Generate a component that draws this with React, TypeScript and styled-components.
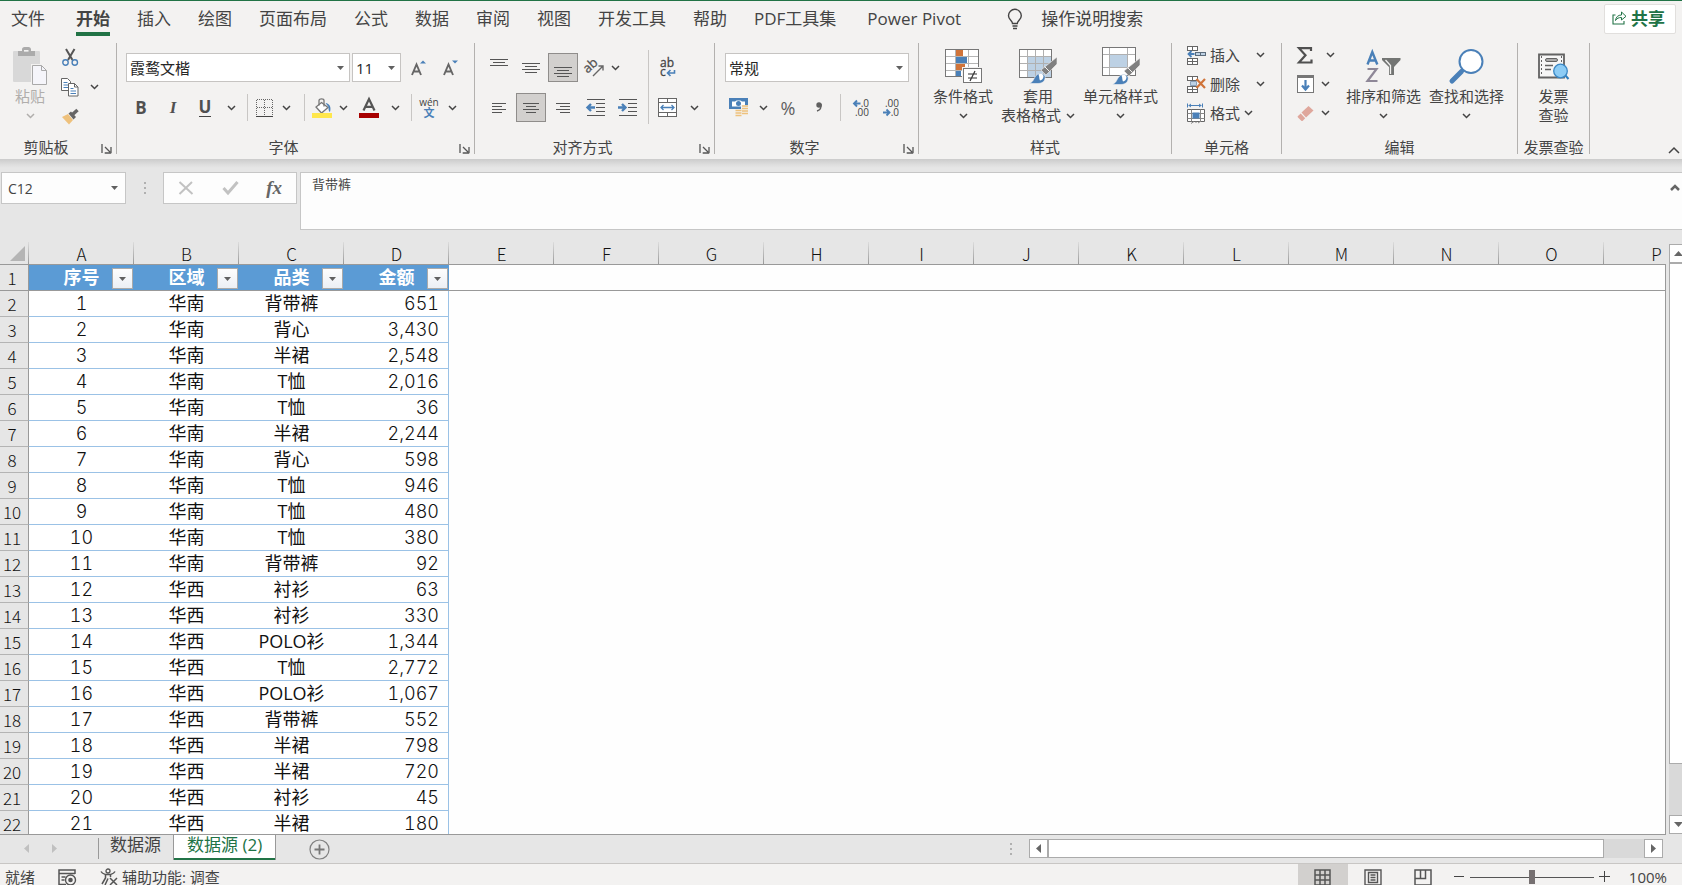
import React from "react";
import styled, { createGlobalStyle, css } from "styled-components";

const UI = `"Open Sans", "Noto Sans CJK SC", sans-serif`;
const GREEN = "#217346";
const BLUE = "#4a80b8";
const INK = "#444";

const GlobalStyle = createGlobalStyle`
  * { box-sizing: border-box; }
  body { margin: 0; background: #e6e6e6; color: ${INK}; font-family: ${UI}; }
  button, input, select, textarea { font: inherit; color: inherit; margin: 0; padding: 0; }
  button { border: 0; background: none; cursor: default; }
  svg { display: block; flex: none; overflow: visible; }
`;

/* ---------- frame ---------- */

const Window = styled.div`
  display: flex;
  flex-direction: column;
  height: 100vh;
  overflow: hidden;
  border-top: 1px solid ${GREEN};
`;

const TabBar = styled.nav`
  flex: none;
  display: flex;
  align-items: flex-start;
  height: 35px;
  padding: 0 6px 0 11px;
  background: #f3f2f1;
`;

const TabList = styled.div`
  display: flex;
  gap: 27px;
`;

const RibbonTab = styled.button<{ $active?: boolean; $wide?: boolean }>`
  height: 35px;
  padding-top: 5px;
  font-size: 17px;
  line-height: 26px;
  white-space: nowrap;
  font-weight: ${(p) => (p.$active ? 700 : 400)};
  border-bottom: 4px solid ${(p) => (p.$active ? GREEN : "transparent")};
  margin-right: ${(p) => (p.$wide ? 4 : 0)}px;
`;

const TellMe = styled.button`
  display: flex;
  align-items: center;
  gap: 18px;
  margin-left: 46px;
  padding-top: 5px;
  font-size: 17px;
  line-height: 26px;
`;

const ShareButton = styled.button`
  display: flex;
  align-items: center;
  gap: 4px;
  height: 30px;
  margin: 3px 0 0 auto;
  padding: 0 10px 3px 7px;
  background: #fff;
  border: 1px solid #e1dfdd;
  border-radius: 2px;
  color: ${GREEN};
  font-size: 17px;
  font-weight: 700;
`;

/* ---------- ribbon ---------- */

const Ribbon = styled.section`
  flex: none;
  display: flex;
  padding: 7px 0 5px;
  background: #f3f2f1;
`;

const GroupBox = styled.div<{ $w: number }>`
  flex: none;
  display: flex;
  flex-direction: column;
  width: ${(p) => p.$w}px;
  height: 111px;
  border-right: 1px solid #b3b1af;
`;

const GroupBody = styled.div<{ $pad?: number; $gap?: number }>`
  flex: 1;
  display: flex;
  align-items: flex-start;
  gap: ${(p) => p.$gap ?? 0}px;
  padding-left: ${(p) => p.$pad ?? 0}px;
`;

const GroupFoot = styled.div`
  display: flex;
  height: 14px;
  font-size: 15px;
  line-height: 14px;
`;

const GroupLabel = styled.span`
  flex: 1;
  text-align: center;
  white-space: nowrap;
`;

const Launcher = styled.button`
  display: flex;
  justify-content: flex-end;
  align-items: flex-end;
  width: 24px;
  padding-right: 4px;
`;

const Rows = styled.div`
  display: flex;
  flex-direction: column;
  gap: 11px;
  padding-top: 10px;
`;

const Row = styled.div<{ $gap?: number }>`
  display: flex;
  align-items: center;
  height: 29px;
  gap: ${(p) => p.$gap ?? 2}px;
`;

const Joined = styled.div`
  display: flex;
`;

const Stack = styled.div<{ $gap?: number; $top?: number; $w?: number }>`
  display: flex;
  flex-direction: column;
  gap: ${(p) => p.$gap ?? 5}px;
  padding-top: ${(p) => p.$top ?? 0}px;
  width: ${(p) => (p.$w ? `${p.$w}px` : "auto")};
`;

const StackRow = styled.div`
  display: flex;
  align-items: center;
  height: 24px;
`;

const ToolButton = styled.button<{ $w?: number; $pressed?: boolean }>`
  display: flex;
  align-items: center;
  justify-content: center;
  width: ${(p) => p.$w ?? 30}px;
  height: 29px;
  ${(p) =>
    p.$pressed &&
    css`
      background: #d2d0ce;
      border: 1px solid #8f8d8b;
    `}
`;

const Glyph = styled.span<{ $italic?: boolean; $line?: boolean }>`
  font-size: 17px;
  line-height: 18px;
  font-weight: 700;
  font-style: ${(p) => (p.$italic ? "italic" : "normal")};
  font-family: ${(p) => (p.$italic ? `"Liberation Serif", serif` : UI)};
  border-bottom: ${(p) => (p.$line ? `1px solid ${INK}` : "0")};
  color: #505050;
`;

const Percent = styled.span`
  font-size: 18px;
  color: #606060;
`;

const Rule = styled.span<{ $tall?: boolean }>`
  width: 1px;
  height: ${(p) => (p.$tall ? 74 : 27)}px;
  margin: ${(p) => (p.$tall ? "7px 7px 0 6px" : "0 5px")};
  background: #c8c6c4;
`;

const Combo = styled.label<{ $w: number }>`
  display: grid;
  align-items: center;
  width: ${(p) => p.$w}px;
  height: 29px;
  background: #fff;
  border: 1px solid #c6c4c2;
  color: #262626;
  > * {
    grid-area: 1 / 1;
  }
  > svg {
    justify-self: end;
    margin-right: 5px;
    pointer-events: none;
  }
`;

const ComboSelect = styled.select`
  appearance: none;
  width: 100%;
  height: 27px;
  padding-left: 3px;
  border: 0;
  background: none;
  font-size: 15px;
`;

const BigButton = styled.button<{ $off?: boolean; $w?: number }>`
  display: flex;
  flex-direction: column;
  align-items: center;
  width: ${(p) => (p.$w ? `${p.$w}px` : "auto")};
  padding-top: 3px;
  font-size: 15px;
  line-height: 19px;
  white-space: nowrap;
  color: ${(p) => (p.$off ? "#b0aeac" : INK)};
`;

const BigIcon = styled.span`
  display: flex;
  align-items: center;
  justify-content: center;
  height: 41px;
`;

const BigLine = styled.span`
  display: flex;
  align-items: center;
  justify-content: center;
  gap: 5px;
  height: 19px;
`;

const LineButton = styled.button`
  display: flex;
  align-items: center;
  gap: 4px;
  height: 24px;
  font-size: 15px;
  line-height: 24px;
`;

const LineText = styled.span<{ $w: number }>`
  width: ${(p) => p.$w}px;
  text-align: left;
`;

const Collapse = styled.button`
  align-self: flex-end;
  margin: 0 2px 0 auto;
`;

/* ---------- formula bar ---------- */

const FormulaBar = styled.section`
  flex: none;
  display: flex;
  align-items: flex-start;
  padding: 13px 0 0 1px;
  background: linear-gradient(#cbcbcb, #dcdcdc 5px, #e6e6e6 9px);
  font-size: 13px;
`;

const NameBox = styled.div`
  display: flex;
  align-items: center;
  width: 125px;
  height: 32px;
  padding: 0 7px 0 6px;
  background: #fdfdfd;
  border: 1px solid #c6c6c6;
  font-size: 14px;
`;

const NameInput = styled.input`
  flex: 1;
  min-width: 0;
  border: 0;
  background: none;
  outline: 0;
`;

const Grip = styled.span`
  display: flex;
  align-items: center;
  justify-content: center;
  width: 37px;
  height: 32px;
`;

const EntryButtons = styled.div`
  display: flex;
  align-items: center;
  justify-content: space-around;
  width: 134px;
  height: 32px;
  margin-right: 3px;
  background: #fdfdfd;
  border: 1px solid #c6c6c6;
`;

const Fx = styled.span`
  font: italic 700 19px/28px "Liberation Serif", serif;
  color: #666;
`;

const FormulaField = styled.div`
  flex: 1;
  display: flex;
  align-items: flex-start;
  height: 58px;
  padding-right: 2px;
  background: #fdfdfd;
  border: 1px solid #c6c6c6;
  border-right: 0;
`;

const FormulaInput = styled.textarea`
  flex: 1;
  height: 54px;
  padding: 2px 11px;
  border: 0;
  outline: 0;
  resize: none;
  background: none;
  line-height: 18px;
`;

const Expand = styled.button`
  padding-top: 11px;
`;

/* ---------- sheet ---------- */

const SheetArea = styled.main`
  flex: 1;
  min-height: 0;
  display: flex;
  padding-top: 12px;
`;

const SheetView = styled.div`
  position: relative;
  flex: 1;
  min-width: 0;
  overflow: hidden;
  border-bottom: 1px solid #999;
  &::after {
    content: "";
    position: absolute;
    top: 22px;
    right: 0;
    bottom: 0;
    width: 1px;
    background: #999;
  }
`;

const Grid = styled.table`
  table-layout: fixed;
  width: 1709px;
  border-collapse: separate;
  border-spacing: 0;
  color: #111;
  th,
  td {
    padding: 0;
  }
`;

const RowHeadCol = styled.col`
  width: 29px;
`;

const DataCol = styled.col`
  width: 105px;
`;

const Corner = styled.td`
  background: linear-gradient(#dcdcdc, #999) right / 1px 100% no-repeat #e6e6e6;
  border-bottom: 1px solid #999;
  > svg {
    margin-left: 10px;
  }
`;

const ColHead = styled.th`
  height: 23px;
  border-bottom: 1px solid #999;
  background: linear-gradient(#dcdcdc, #999) right / 1px 100% no-repeat #e6e6e6;
  font: 300 17px/20px "Noto Sans CJK SC", sans-serif;
  && {
    padding-top: 2px;
  }
`;

const RowHead = styled.th<{ $first?: boolean }>`
  height: 26px;
  border-right: 1px solid #999;
  border-bottom: 1px solid ${(p) => (p.$first ? "#999" : "#b4b4b4")};
  background: #e6e6e6;
  font: 300 17px/25px "Noto Sans CJK SC", sans-serif;
  && {
    padding-right: 4px;
  }
`;

const TitleCell = styled.th`
  position: relative;
  height: 26px;
  background: #5b9bd5;
  border-bottom: 1px solid #999;
  color: #fff;
  font-size: 18px;
  line-height: 25px;
`;

const FilterButton = styled.button`
  position: absolute;
  right: 1px;
  bottom: 1px;
  display: flex;
  align-items: center;
  justify-content: center;
  width: 21px;
  height: 21px;
  background: linear-gradient(#fdfdfd, #eceff5);
  border: 1px solid #aaa;
`;

const Cell = styled.td<{ $num?: boolean; $edge?: boolean }>`
  height: 26px;
  background: #fff;
  border-bottom: 1px solid #9bc2e6;
  border-right: ${(p) => (p.$edge ? "1px solid #9bc2e6" : "0")};
  font-family: ${(p) => (p.$num ? "Inter, sans-serif" : UI)};
  font-size: 18px;
  font-weight: ${(p) => (p.$num ? 300 : 400)};
  font-variant-numeric: tabular-nums;
  line-height: 25px;
  text-align: ${(p) => (p.$edge ? "right" : "center")};
  && {
    padding-right: ${(p) => (p.$edge ? 9 : 0)}px;
  }
`;

const Blank = styled.td<{ $first?: boolean }>`
  background: #fefefe;
  border-bottom: ${(p) => (p.$first ? "1px solid #999" : "0")};
`;

const VScroll = styled.div`
  flex: none;
  display: flex;
  flex-direction: column;
  width: 16px;
  padding: 2px 0 1px 3px;
  overflow: hidden;
`;

const ScrollButton = styled.button`
  flex: none;
  display: flex;
  align-items: center;
  justify-content: center;
  width: 19px;
  height: 19px;
  background: #fff;
  border: 1px solid #ababab;
`;

const Thumb = styled.div<{ $grow: number; $wide?: boolean }>`
  flex: ${(p) => p.$grow} 1 0;
  width: ${(p) => (p.$wide ? "auto" : "19px")};
  background: #fff;
  border: 1px solid #ababab;
`;

const Track = styled.div<{ $grow: number }>`
  flex: ${(p) => p.$grow} 1 0;
  background: #d9d9d9;
`;

/* ---------- sheet tabs and status ---------- */

const SheetBar = styled.footer`
  flex: none;
  display: flex;
  height: 29px;
  border-bottom: 1px solid #c8c6c4;
`;

const NavButtons = styled.div`
  display: flex;
  align-items: center;
  width: 98px;
  padding: 0 0 2px 12px;
`;

const SheetTab = styled.button<{ $active?: boolean }>`
  font-size: 17px;
  white-space: nowrap;
  ${(p) =>
    p.$active
      ? css`
          height: 26px;
          margin-top: -1px;
          padding: 0 13px 5px;
          background: #fff;
          color: ${GREEN};
          border: solid #999;
          border-width: 0 1px;
          line-height: 21px;
          box-shadow: inset 0 -2px ${GREEN};
        `
      : css`
          height: 21px;
          margin-top: 3px;
          padding: 0 12px 7px 11px;
          border-left: 1px solid #999;
          line-height: 14px;
        `}
`;

const AddSheet = styled.button`
  align-self: center;
  margin-left: 33px;
`;

const HScroll = styled.div`
  display: flex;
  align-items: center;
  width: 41%;
  height: 27px;
  margin-left: auto;
  padding-right: 19px;
  > div {
    height: 19px;
  }
`;

const StatusBar = styled.footer`
  flex: none;
  display: flex;
  height: 21px;
  padding: 0 15px 0 5px;
  background: #f3f2f1;
  font-size: 15px;
  line-height: 26px;
  white-space: nowrap;
`;

const StatusItem = styled.button`
  display: flex;
  align-items: center;
  gap: 4px;
  height: 26px;
  margin-right: 23px;
`;

const StatusTools = styled.div`
  display: flex;
  height: 26px;
  margin-left: auto;
`;

const ViewButton = styled.button<{ $active?: boolean }>`
  display: flex;
  align-items: center;
  justify-content: center;
  width: 50px;
  height: 26px;
  background: ${(p) => (p.$active ? "#d2d0ce" : "none")};
`;

const ZoomStep = styled.button`
  display: flex;
  align-items: center;
  justify-content: center;
  width: 22px;
  height: 25px;
`;

const ZoomSlider = styled.input`
  appearance: none;
  width: 124px;
  height: 26px;
  background: linear-gradient(#555, #555) center / 100% 1px no-repeat;
  &::-webkit-slider-thumb {
    appearance: none;
    width: 6px;
    height: 14px;
    background: #767071;
  }
`;

const ZoomValue = styled.span`
  margin-left: 13px;
`;

/* ---------- icons ---------- */

const Svg = ({ w, h, children, crisp }: { w: number; h: number; children: React.ReactNode; crisp?: boolean }) => (
  <svg width={w} height={h} viewBox={`0 0 ${w} ${h}`} fill="none" aria-hidden="true" shapeRendering={crisp ? "crispEdges" : undefined}>
    {children}
  </svg>
);

const Chevron = ({ color = INK }: { color?: string }) => (
  <Svg w={9} h={6}>
    <path d="M1 1l3.500 3.500L8 1" stroke={color} strokeWidth="1.500" />
  </Svg>
);

const DownTri = () => (
  <Svg w={7} h={4}>
    <path d="M0 0h7L3.500 4z" fill="#606060" />
  </Svg>
);

const LauncherIcon = () => (
  <Svg w={11} h={10}>
    <path d="M1 0v9M4 3l5 5M10 3v6.300M3.700 9h6.300" stroke="#555" strokeWidth="1.300" />
  </Svg>
);

const Bulb = () => (
  <Svg w={16} h={21}>
    <path d="M5.500 14.500c0-3-4-3.800-4-7.800a6.300 6.300 0 0 1 12.800 0c0 4-4 4.800-4 7.800zM5.500 17h5M6 19.500h4" stroke="#444" strokeWidth="1.400" />
  </Svg>
);

const ShareIcon = () => (
  <Svg w={15} h={15}>
    <path d="M3.500 5H1v9h11v-3" stroke={GREEN} strokeWidth="1.100" />
    <path d="M3.500 10.500c.5-3.500 2.500-5.500 6-5.500V2l4.500 4.300L9.500 10V7.500c-3 0-4.500.8-6 3z" stroke={GREEN} />
  </Svg>
);

const PasteIcon = () => (
  <Svg w={36} h={39}>
    <rect x="1" y="4" width="27" height="31" rx="1" fill="#d8d8d8" />
    <path d="M6 9V4h4V2.500C10 1 11 0 12.500 0h4C18 0 19 1 19 2.500V4h4v5zM12 3v2h4.500V3z" fill="#ababab" fillRule="evenodd" />
    <path d="M19 17h17v22H19z" fill="#f3f2f1" />
    <path d="M20.500 18.500h9l5 5v14h-14z" fill="#f5f5fa" stroke="#a9a9a9" />
    <path d="M29.500 18.500v5h5" stroke="#a9a9a9" />
  </Svg>
);

const CutIcon = () => (
  <Svg w={17} h={19}>
    <path d="M4 1l6.500 11M12.500 1L6 12" stroke="#555" strokeWidth="2" />
    <circle cx="3.500" cy="14.500" r="2.700" stroke={BLUE} strokeWidth="1.400" />
    <circle cx="12.800" cy="14.500" r="2.700" stroke={BLUE} strokeWidth="1.400" />
  </Svg>
);

const CopyIcon = () => (
  <Svg w={18} h={19}>
    <path d="M.5.500h6l3 3v9h-9z" fill="#fff" stroke="#666" />
    <path d="M2.500 4.500h4M2.500 7h5M2.500 9.500h5" stroke={BLUE} />
    <path d="M7.500 5.500h6l3.500 3.500v9H7.500z" fill="#fff" stroke="#666" />
    <path d="M13.500 5.500V9H17" stroke="#666" />
    <path d="M9.500 10.500h3M9.500 13h5.500M9.500 15.500h5.500" stroke={BLUE} />
  </Svg>
);

const PainterIcon = () => (
  <Svg w={18} h={16}>
    <path d="M1 8l6-3 5 6-4 4.500z" fill="#eec17c" />
    <path d="M7.500 4.500L10 2.500l5 5.500-2.500 2.500z" fill="#666" />
    <path d="M11.500 5.500L16.500 1" stroke="#666" strokeWidth="3.500" />
  </Svg>
);

const FontStep = ({ up }: { up?: boolean }) => (
  <Svg w={15} h={16}>
    <path d="M1 15L5.500 4.500 10 15M2.700 11.500h5.600" stroke="#666" strokeWidth="1.900" />
    <path d={up ? "M9 3.500h6L12 .5z" : "M9 .5h6L12 3.500z"} fill={BLUE} />
  </Svg>
);

const BorderIcon = () => (
  <Svg w={17} h={18} crisp>
    <path d="M.5.500h16M.5 8.500h16" stroke="#666" strokeDasharray="1 1" />
    <path d="M.5.500v16M8.500.500v16M16.500.500v16" stroke="#666" strokeDasharray="1 1" />
    <path d="M0 17.500h17" stroke="#444" />
  </Svg>
);

const FillIcon = () => (
  <Svg w={20} h={20}>
    <path d="M9.500 4.500L16 9.500l-6.500 5.500L4 9z" fill="#fff" stroke="#777" strokeWidth="1.300" />
    <path d="M7 7.500V2.500c0-2.200 5-2.200 5 0v6" stroke="#777" strokeWidth="1.300" />
    <path d="M13.500 5c4 .5 6 4 4.500 9-1.500-.5-1.500-3.500-1.500-5z" fill={BLUE} />
    <rect y="15" width="20" height="5" fill="#ffe74c" />
  </Svg>
);

const FontColorIcon = () => (
  <Svg w={20} h={20}>
    <path d="M4.500 12.500L10 1l5.500 11.500M6.500 8.800h7" stroke="#555" strokeWidth="2.200" />
    <rect y="15" width="20" height="5" fill="#a80000" />
  </Svg>
);

const Phonetic = styled.span`
  display: flex;
  flex-direction: column;
  align-items: center;
  font-size: 10px;
  line-height: 9px;
  color: #444;
  > b {
    font-size: 11px;
    line-height: 11px;
    color: ${BLUE};
  }
`;

const Lines = ({ rows, w }: { rows: [number, number, number][]; w: number }) => (
  <Svg w={w} h={18} crisp>
    {rows.map(([x, y, len]) => (
      <rect key={y} x={x} y={y} width={len} height={1} fill="#555" />
    ))}
  </Svg>
);

const OrientIcon = () => (
  <Svg w={20} h={18}>
    <g transform="rotate(-42 7 8)">
      <text x="-1" y="10" fontSize="13" fontFamily="Open Sans" fill="#555" stroke="#555" strokeWidth=".3">
        ab
      </text>
    </g>
    <path d="M8 17L18 7M13.500 7h4.500v4.500" stroke="#666" strokeWidth="1.400" />
  </Svg>
);

const IndentIcon = ({ right }: { right?: boolean }) => (
  <Svg w={19} h={17}>
    <path d="M1 .5h18M10 4.500h9M10 8.500h9M10 12.500h9M1 16.500h18" stroke="#555" shapeRendering="crispEdges" />
    <path d={right ? "M0 8.500h7M4 5l3.500 3.500L4 12" : "M9 8.500H2M5 5L1.500 8.500 5 12"} stroke={BLUE} strokeWidth="2.400" />
  </Svg>
);

const WrapIcon = () => (
  <Svg w={17} h={18}>
    <text x="1" y="8" fontSize="12" fontFamily="Open Sans" fill="#444" stroke="#444" strokeWidth=".3">
      ab
    </text>
    <text x="1" y="17" fontSize="12" fontFamily="Open Sans" fill="#444" stroke="#444" strokeWidth=".3">
      c
    </text>
    <path d="M15.500 11v3H9M11.500 11L8.500 14l3 3" stroke={BLUE} strokeWidth="1.600" />
  </Svg>
);

const MergeIcon = () => (
  <Svg w={19} h={19}>
    <path d="M.5.500h18v18H.5zM.5 4.500h18M.5 14.500h18M9.500.500v4M9.500 14.500v4" fill="#fff" stroke="#666" shapeRendering="crispEdges" />
    <path d="M3 9.500h13M5.500 7L3 9.500 5.500 12M13.500 7L16 9.500 13.500 12" stroke={BLUE} strokeWidth="1.300" />
  </Svg>
);

const CurrencyIcon = () => (
  <Svg w={20} h={20}>
    <path d="M0 0h19v11H0z" fill={BLUE} />
    <path d="M3 3.500h3l1.500-1h4l1.500 1h3v4h-3v1H3z" fill="#fff" />
    <circle cx="9.500" cy="5.500" r="2.500" fill={BLUE} />
    <path d="M12 7h7v10h-5v2H6v-8h6z" fill="#f3f2f1" />
    <path d="M13 8h6M13 10.500h6M13 13h6M13 15.500h6M6.500 12.500h6M6.500 15h6M6.500 17.500h6" stroke="#eec17c" strokeWidth="1.600" />
  </Svg>
);

const CommaIcon = () => (
  <Svg w={7} h={11}>
    <circle cx="3" cy="3" r="2.700" fill="#606060" />
    <path d="M5 2c.6 3.500-1 6-4 7" stroke="#606060" strokeWidth="1.500" />
  </Svg>
);

const DecimalIcon = ({ less }: { less?: boolean }) => (
  <Svg w={16} h={18}>
    <text x="16" y="8" textAnchor="end" fontSize="10" fontFamily="Open Sans" fill="#444">
      {less ? ".00" : ".0"}
    </text>
    <text x="16" y="17" textAnchor="end" fontSize="10" fontFamily="Open Sans" fill="#444">
      {less ? ".0" : ".00"}
    </text>
    <path d={less ? "M0 13.500h6M3.500 10.500l3 3-3 3" : "M7.500 4.500h-6M4 1.500l-3 3 3 3"} stroke={BLUE} strokeWidth="1.900" />
  </Svg>
);

const CondIcon = () => (
  <Svg w={37} h={35} crisp>
    <path d="M.5.500h33v27H.5z" fill="#fff" stroke="#777" />
    <path d="M11 0h7v7h-7zM11 15h9v6h-9z" fill="#d0743a" />
    <path d="M11 8h11v6H11zM11 22h5v5h-5z" fill={BLUE} />
    <path d="M1 7.500h32M1 14.500h32M1 21.500h32M10.500 1v26M23.500 1v26" stroke="#b5b5b5" />
    <path d="M.5.500h33v27H.5z" stroke="#777" />
    <rect x="17" y="18" width="20" height="17" fill="#f3f2f1" />
    <rect x="18.500" y="19.500" width="18" height="14" fill="#fff" stroke="#777" />
    <path d="M23 25h9M23 29h9M30 22l-5 10" stroke="#333" strokeWidth="1.200" shapeRendering="auto" />
  </Svg>
);

const Brush = () => (
  <g>
    <path d="M38 8v7L27 26l-5-5z" fill="#808080" stroke="#f3f2f1" strokeWidth=".6" />
    <path d="M25.500 17.500l5 5" stroke="#f3f2f1" />
    <path d="M10 34.500c4-1.500 4.500-4 6-6.500 2.500-4.500 8.500-4.500 10-1 1 4.500-2.500 7.500-7 7.500z" fill={BLUE} stroke="#f3f2f1" strokeWidth=".6" />
    <path d="M19.500 25.500c2.500-1.500 5-.5 5 2-.3 2.500-1.500 3.500-3.500 4-1-1.500-.3-3.500-1.500-6z" fill="#fff" />
  </g>
);

const TableStyleIcon = () => (
  <Svg w={38} h={36}>
    <g shapeRendering="crispEdges">
      <path d="M.5.500h32v28H.5z" fill="#fff" />
      <path d="M9 8h24v21H9z" fill="#bdd1e4" />
      <path d="M1 7.500h32M1 14.500h32M1 21.500h32M8.500 1v27M16.500 1v27M24.500 1v27" stroke="#b0b0b0" />
      <path d="M.5.500h32v28H.5z" stroke="#777" />
    </g>
    <Brush />
  </Svg>
);

const CellStyleIcon = () => (
  <Svg w={38} h={39}>
    <g shapeRendering="crispEdges">
      <path d="M.5.500h33v28H.5z" fill="#fff" />
      <path d="M8 8h18v13H8z" fill="#bdd1e4" />
      <path d="M1 7.500h32M1 20.500h32M7.500 1v27M25.500 1v27" stroke="#b0b0b0" />
      <path d="M.5.500h33v28H.5z" stroke="#777" />
    </g>
    <g transform="translate(0 3)">
      <Brush />
    </g>
  </Svg>
);

const InsertIcon = () => (
  <Svg w={19} h={19} crisp>
    <path d="M.5.500h10v4H.5zM5.500.500v4M.5 12.500h10v6H.5zM5.500 12.500v6M.5 15.500h10" stroke="#666" fill="#fff" />
    <path d="M8.500 6.500h10v3h-10zM13.500 6.500v3" stroke="#5b6b7b" fill="#bdd1e4" />
    <path d="M1.500 8h6M4.500 5l-3 3 3 3" stroke={BLUE} strokeWidth="1.800" shapeRendering="auto" />
  </Svg>
);

const DeleteIcon = () => (
  <Svg w={19} h={19}>
    <path d="M.5 1.500h10v4H.5zM5.500 1.500v4M.5 11.500h10v6H.5zM5.500 11.500v6M.5 14.500h10" stroke="#666" fill="#fff" shapeRendering="crispEdges" />
    <path d="M3.500 6.500h6v4h-6z" stroke="#8aa0b8" fill="#bdd1e4" />
    <path d="M9.500 4l8.500 9M18 4l-8.500 9" stroke="#d0743a" strokeWidth="2.200" />
  </Svg>
);

const FormatIcon = () => (
  <Svg w={19} h={21}>
    <path d="M1.500 2.500h13M.5.500v4M15.500.500v4M4 1L2 2.500 4 4M12 1l2 1.500L12 4" stroke={BLUE} />
    <path d="M.5 6.500h17v12H.5z" fill="#fff" stroke="#666" />
    <path d="M4.500 6.500v12M13.500 6.500v12M.5 10.500h17M.5 15.500h17M9 18.500v1.500M4 20.500l3-2M11 20l3-2" stroke="#888" />
    <rect x="5.500" y="9.500" width="7" height="6" fill={BLUE} />
  </Svg>
);

const SigmaIcon = () => (
  <Svg w={16} h={17}>
    <path d="M14 4V1.200H2L8.500 8.300 2 15.500h12.500v-3" stroke="#505050" strokeWidth="2.200" />
  </Svg>
);

const FillDownIcon = () => (
  <Svg w={17} h={18}>
    <rect x=".5" y=".5" width="16" height="17" fill="#fff" stroke="#777" />
    <rect width="17" height="3" fill="#777" />
    <path d="M8.500 5v9M5 10.500l3.500 4 3.500-4" stroke={BLUE} strokeWidth="2.200" />
  </Svg>
);

const EraserIcon = () => (
  <Svg w={17} h={17}>
    <path d="M11.500 1l5 4.500-7.500 7-4.500-5z" fill="#dfa79c" />
    <path d="M3.700 8.400l4.500 4.800-2.400 2.500c-.6.500-1 .5-1.500 0L1 12.500c-.5-.6-.5-1 0-1.500z" fill="#dfa79c" />
  </Svg>
);

const SortIcon = () => (
  <Svg w={35} h={33}>
    <path d="M1.500 14.500L6.300 2l5 12.500M3.300 10.500h6.200" stroke={BLUE} strokeWidth="2.400" />
    <path d="M1.500 19h9L1.500 31H11.500" stroke="#8e8797" strokeWidth="2.200" />
    <path d="M16 8h18.500v2L28 17v8h-5v-8L16 10z" fill="#737573" />
    <path d="M19.500 10l5 5.500V24" stroke="#f3f2f1" strokeWidth="1.300" />
  </Svg>
);

const FindIcon = () => (
  <Svg w={35} h={35}>
    <path d="M12.500 22.500L3 32" stroke={BLUE} strokeWidth="5" strokeLinecap="round" />
    <circle cx="22" cy="12.500" r="11.500" fill="#fff" stroke={BLUE} strokeWidth="2" />
  </Svg>
);

const InvoiceIcon = () => (
  <Svg w={31} h={28}>
    <path d="M1 1.500h25v23H1z" fill="#f6f6f6" stroke="#626262" strokeWidth="1.800" />
    <path d="M3.500 3v20M23.500 3v12" stroke="#626262" strokeDasharray="2 2" />
    <rect x="7.500" y="5.500" width="12" height="3" rx="1.500" fill="#aaa" stroke="#626262" />
    <path d="M7 12.500h8M7 16.500h6" stroke="#626262" strokeWidth="1.500" />
    <path d="M27 22l3.500 4" stroke="#2f7fc0" strokeWidth="2" />
    <circle cx="22.500" cy="18" r="6.800" fill="#8dccf5" stroke="#3a87c4" strokeWidth="1.300" />
  </Svg>
);

const Arrow = ({ dir, color = "#666" }: { dir: "left" | "right" | "up" | "down"; color?: string }) => {
  const d = { left: "M7 0v9L2 4.500z", right: "M2 0v9l5-4.500z", up: "M0 7h9L4.500 2z", down: "M0 2h9L4.500 7z" }[dir];
  return (
    <Svg w={9} h={9}>
      <path d={d} fill={color} />
    </Svg>
  );
};

const Dots = () => (
  <Svg w={2} h={12} crisp>
    <path d="M0 0h2v2H0zM0 5h2v2H0zM0 10h2v2H0z" fill="#b0b0b0" />
  </Svg>
);

/* ---------- data ---------- */

const TABS = ["文件", "开始", "插入", "绘图", "页面布局", "公式", "数据", "审阅", "视图", "开发工具", "帮助", "PDF工具集", "Power Pivot"];
const COLUMNS = "ABCDEFGHIJKLMNOP".split("");
const TITLES = ["序号", "区域", "品类", "金额"];
const RECORDS: [string, string, string][] = [
  ["华南", "背带裤", "651"],
  ["华南", "背心", "3,430"],
  ["华南", "半裙", "2,548"],
  ["华南", "T恤", "2,016"],
  ["华南", "T恤", "36"],
  ["华南", "半裙", "2,244"],
  ["华南", "背心", "598"],
  ["华南", "T恤", "946"],
  ["华南", "T恤", "480"],
  ["华南", "T恤", "380"],
  ["华南", "背带裤", "92"],
  ["华西", "衬衫", "63"],
  ["华西", "衬衫", "330"],
  ["华西", "POLO衫", "1,344"],
  ["华西", "T恤", "2,772"],
  ["华西", "POLO衫", "1,067"],
  ["华西", "背带裤", "552"],
  ["华西", "半裙", "798"],
  ["华西", "半裙", "720"],
  ["华西", "衬衫", "45"],
  ["华西", "半裙", "180"],
];

/* ---------- composed parts ---------- */

type GroupProps = { label: string; w: number; pad?: number; gap?: number; launcher?: boolean; children: React.ReactNode };

const Group = ({ label, w, pad, gap, launcher, children }: GroupProps) => (
  <GroupBox $w={w} role="group" aria-label={label}>
    <GroupBody $pad={pad} $gap={gap}>
      {children}
    </GroupBody>
    <GroupFoot>
      <GroupLabel>{label}</GroupLabel>
      {launcher && (
        <Launcher aria-label={`${label}设置`}>
          <LauncherIcon />
        </Launcher>
      )}
    </GroupFoot>
  </GroupBox>
);

const More = ({ w = 18, label }: { w?: number; label: string }) => (
  <ToolButton $w={w} aria-label={`${label}选项`}>
    <Chevron />
  </ToolButton>
);

const Tool = ({ label, w, pressed, children }: { label: string; w?: number; pressed?: boolean; children: React.ReactNode }) => (
  <ToolButton $w={w} $pressed={pressed} aria-label={label} aria-pressed={pressed}>
    {children}
  </ToolButton>
);

const Picker = ({ label, value, w }: { label: string; value: string; w: number }) => (
  <Combo $w={w}>
    <ComboSelect aria-label={label} defaultValue={value}>
      <option>{value}</option>
    </ComboSelect>
    <DownTri />
  </Combo>
);

const Big = ({ icon, lines, tail, off, w }: { icon: React.ReactNode; lines: string[]; tail?: boolean; off?: boolean; w?: number }) => (
  <BigButton $off={off} $w={w}>
    <BigIcon>{icon}</BigIcon>
    {lines.map((line, i) => (
      <BigLine key={line}>
        {line}
        {tail && i === 1 && <Chevron />}
      </BigLine>
    ))}
    {lines.length === 1 && (
      <BigLine>
        <Chevron color={off ? "#b0aeac" : INK} />
      </BigLine>
    )}
  </BigButton>
);

const ClipboardGroup = () => (
  <Group label="剪贴板" w={117} launcher>
    <Big off w={60} icon={<PasteIcon />} lines={["粘贴"]} />
    <Stack $gap={6} $top={2}>
      <StackRow>
        <Tool label="剪切" w={20}><CutIcon /></Tool>
      </StackRow>
      <StackRow>
        <Tool label="复制" w={20}><CopyIcon /></Tool>
        <More w={28} label="复制" />
      </StackRow>
      <StackRow>
        <Tool label="格式刷" w={20}><PainterIcon /></Tool>
      </StackRow>
    </Stack>
  </Group>
);

const FontGroup = () => (
  <Group label="字体" w={358} pad={9} launcher>
    <Rows>
      <Row>
        <Picker label="字体" value="霞鹜文楷" w={224} />
        <Picker label="字号" value="11" w={49} />
        <Tool label="增大字号"><FontStep up /></Tool>
        <Tool label="减小字号"><FontStep /></Tool>
      </Row>
      <Row>
        <Tool label="加粗"><Glyph>B</Glyph></Tool>
        <Tool label="倾斜"><Glyph $italic>I</Glyph></Tool>
        <Tool label="下划线"><Glyph $line>U</Glyph></Tool>
        <More label="下划线" />
        <Rule />
        <Tool label="边框" w={18}><BorderIcon /></Tool>
        <More label="边框" w={22} />
        <Rule />
        <Tool label="填充颜色" w={20}><FillIcon /></Tool>
        <More label="填充颜色" />
        <Tool label="字体颜色"><FontColorIcon /></Tool>
        <More label="字体颜色" />
        <Rule />
        <Tool label="拼音" w={20}><Phonetic>wén<b>文</b></Phonetic></Tool>
        <More label="拼音" w={22} />
      </Row>
    </Rows>
  </Group>
);

const AlignGroup = () => (
  <Group label="对齐方式" w={240} pad={9} launcher>
    <Rows>
      <Row>
        <Tool label="顶端对齐"><Lines w={18} rows={[[0, 0, 18], [3, 3, 12], [0, 6, 18]]} /></Tool>
        <Tool label="垂直居中"><Lines w={18} rows={[[0, 4, 18], [3, 7, 12], [0, 10, 18], [3, 13, 12]]} /></Tool>
        <Tool label="底端对齐" pressed><Lines w={18} rows={[[0, 8, 18], [3, 11, 12], [0, 14, 18], [3, 17, 12]]} /></Tool>
        <Joined>
          <Tool label="方向"><OrientIcon /></Tool>
          <More w={10} label="方向" />
        </Joined>
      </Row>
      <Row>
        <Tool label="左对齐"><Lines w={16} rows={[[1, 4, 14], [1, 7, 10], [1, 10, 14], [1, 13, 10]]} /></Tool>
        <Tool label="居中" pressed><Lines w={16} rows={[[0, 4, 16], [3, 7, 10], [0, 10, 16], [3, 13, 10]]} /></Tool>
        <Tool label="右对齐"><Lines w={16} rows={[[1, 4, 14], [5, 7, 10], [1, 10, 14], [5, 13, 10]]} /></Tool>
        <Tool label="减少缩进量"><IndentIcon /></Tool>
        <Tool label="增加缩进量"><IndentIcon right /></Tool>
      </Row>
    </Rows>
    <Rule $tall />
    <Rows>
      <Row>
        <Tool label="自动换行" w={22}><WrapIcon /></Tool>
      </Row>
      <Row>
        <Tool label="合并后居中" w={22}><MergeIcon /></Tool>
        <More label="合并后居中" w={28} />
      </Row>
    </Rows>
  </Group>
);

const NumberGroup = () => (
  <Group label="数字" w={204} pad={10} launcher>
    <Rows>
      <Row>
        <Picker label="数字格式" value="常规" w={184} />
      </Row>
      <Row $gap={1}>
        <Tool label="会计数字格式" w={28}><CurrencyIcon /></Tool>
        <More label="会计数字格式" />
        <Tool label="百分比样式"><Percent>%</Percent></Tool>
        <Tool label="千位分隔样式"><CommaIcon /></Tool>
        <Rule />
        <Tool label="增加小数位数" w={28}><DecimalIcon /></Tool>
        <Tool label="减少小数位数"><DecimalIcon less /></Tool>
      </Row>
    </Rows>
  </Group>
);

const CellsGroup = () => (
  <Group label="单元格" w={110} pad={15}>
    <Stack>
      <LineButton><InsertIcon /><LineText $w={42}>插入</LineText><Chevron /></LineButton>
      <LineButton><DeleteIcon /><LineText $w={42}>删除</LineText><Chevron /></LineButton>
      <LineButton><FormatIcon /><LineText $w={30}>格式</LineText><Chevron /></LineButton>
    </Stack>
  </Group>
);

const EditGroup = () => (
  <Group label="编辑" w={236} pad={12}>
    <Stack $w={52}>
      <StackRow>
        <Tool label="自动求和" w={22}><SigmaIcon /></Tool>
        <More w={28} label="自动求和" />
      </StackRow>
      <StackRow>
        <Tool label="填充" w={22}><FillDownIcon /></Tool>
        <More label="填充" />
      </StackRow>
      <StackRow>
        <Tool label="清除" w={22}><EraserIcon /></Tool>
        <More label="清除" />
      </StackRow>
    </Stack>
    <GroupBody $gap={8}>
      <Big icon={<SortIcon />} lines={["排序和筛选"]} />
      <Big icon={<FindIcon />} lines={["查找和选择"]} />
    </GroupBody>
  </Group>
);

const Sheet = () => (
  <SheetView>
    <Grid>
      <colgroup>
        <RowHeadCol />
        {COLUMNS.map((c) => <DataCol key={c} />)}
      </colgroup>
      <thead>
        <tr>
          <Corner>
            <Svg w={15} h={15}><path d="M15 0v15H0z" fill="#b5b5b5" /></Svg>
          </Corner>
          {COLUMNS.map((c) => <ColHead key={c} scope="col">{c}</ColHead>)}
        </tr>
      </thead>
      <tbody>
        <tr>
          <RowHead $first scope="row">1</RowHead>
          {TITLES.map((t) => (
            <TitleCell key={t}>
              {t}
              <FilterButton aria-label={`筛选${t}`}><DownTri /></FilterButton>
            </TitleCell>
          ))}
          <Blank $first colSpan={12} />
        </tr>
        {RECORDS.map(([area, kind, amount], i) => (
          <tr key={i}>
            <RowHead scope="row">{i + 2}</RowHead>
            <Cell $num>{i + 1}</Cell>
            <Cell>{area}</Cell>
            <Cell>{kind}</Cell>
            <Cell $num $edge>{amount}</Cell>
            <Blank colSpan={12} />
          </tr>
        ))}
      </tbody>
    </Grid>
  </SheetView>
);

export default function App() {
  return (
    <Window>
      <GlobalStyle />
      <TabBar>
        <TabList>
          {TABS.map((t, i) => (
            <RibbonTab key={t} $active={i === 1} $wide={i === 0 || i === 11}>{t}</RibbonTab>
          ))}
        </TabList>
        <TellMe><Bulb />操作说明搜索</TellMe>
        <ShareButton><ShareIcon />共享</ShareButton>
      </TabBar>

      <Ribbon>
        <ClipboardGroup />
        <FontGroup />
        <AlignGroup />
        <NumberGroup />
        <Group label="样式" w={253} pad={14} gap={8}>
          <Big icon={<CondIcon />} lines={["条件格式"]} />
          <Big icon={<TableStyleIcon />} lines={["套用", "表格格式"]} tail />
          <Big icon={<CellStyleIcon />} lines={["单元格样式"]} />
        </Group>
        <CellsGroup />
        <EditGroup />
        <Group label="发票查验" w={72}>
          <Big w={72} icon={<InvoiceIcon />} lines={["发票", "查验"]} />
        </Group>
        <Collapse aria-label="折叠功能区">
          <Svg w={12} h={8}><path d="M1 7l5-5 5 5" stroke="#444" strokeWidth="1.500" /></Svg>
        </Collapse>
      </Ribbon>

      <FormulaBar>
        <NameBox>
          <NameInput aria-label="名称框" defaultValue="C12" />
          <DownTri />
        </NameBox>
        <Grip><Dots /></Grip>
        <EntryButtons>
          <button aria-label="取消">
            <Svg w={16} h={14}><path d="M1.500 1l13 12M14 1L1.500 13" stroke="#c2c2c2" strokeWidth="2" /></Svg>
          </button>
          <button aria-label="输入">
            <Svg w={17} h={14}><path d="M1.500 7l4.500 5L15.500 1" stroke="#c2c2c2" strokeWidth="3" /></Svg>
          </button>
          <button aria-label="插入函数"><Fx>fx</Fx></button>
        </EntryButtons>
        <FormulaField>
          <FormulaInput aria-label="编辑栏" defaultValue="背带裤" />
          <Expand aria-label="折叠编辑栏">
            <Svg w={10} h={7}><path d="M1 6l4-4 4 4" stroke="#666" strokeWidth="2.500" /></Svg>
          </Expand>
        </FormulaField>
      </FormulaBar>

      <SheetArea>
        <Sheet />
        <VScroll>
          <ScrollButton aria-label="向上滚动"><Arrow dir="up" /></ScrollButton>
          <Thumb $grow={501} />
          <Track $grow={51} />
          <ScrollButton aria-label="向下滚动"><Arrow dir="down" /></ScrollButton>
        </VScroll>
      </SheetArea>

      <SheetBar>
        <NavButtons>
          <Tool label="上一个工作表" w={28}><Arrow dir="left" color="#c0c0c0" /></Tool>
          <Tool label="下一个工作表" w={28}><Arrow dir="right" color="#c0c0c0" /></Tool>
        </NavButtons>
        <SheetTab>数据源</SheetTab>
        <SheetTab $active>数据源 (2)</SheetTab>
        <AddSheet aria-label="新工作表">
          <Svg w={21} h={21}>
            <circle cx="10.500" cy="10.500" r="9.500" stroke="#808080" strokeWidth="1.200" />
            <path d="M10.500 5.500v10M5.500 10.500h10" stroke="#777" strokeWidth="1.800" />
          </Svg>
        </AddSheet>
        <HScroll>
          <Grip><Dots /></Grip>
          <ScrollButton aria-label="向左滚动"><Arrow dir="left" /></ScrollButton>
          <Thumb $grow={557} $wide />
          <Track $grow={40} />
          <ScrollButton aria-label="向右滚动"><Arrow dir="right" /></ScrollButton>
        </HScroll>
      </SheetBar>

      <StatusBar>
        <StatusItem as="span">就绪</StatusItem>
        <StatusItem aria-label="录制宏">
          <Svg w={19} h={17}>
            <path d="M8 15.500H1V1h16v4M1 4.500h16M3.500 8h4M3.500 11h3" stroke="#555" strokeWidth="1.500" />
            <circle cx="12.500" cy="11" r="5" fill="#f3f2f1" stroke="#555" strokeWidth="1.400" />
            <circle cx="12.500" cy="11" r="2.300" fill="#555" />
          </Svg>
        </StatusItem>
        <StatusItem>
          <Svg w={18} h={18}>
            <circle cx="8" cy="3" r="2" stroke="#555" strokeWidth="1.300" />
            <path d="M1 3.500c1 2 3 2.500 4.500 3V10L2 16M15 3.500c-1 2-3 2.500-4.500 3V9M8 10.500L5 17M5.500 6.500h5" stroke="#555" strokeWidth="1.500" />
            <path d="M10 10l7 7M17 10l-7 7" stroke="#555" strokeWidth="1.500" />
          </Svg>
          辅助功能: 调查
        </StatusItem>
        <StatusTools>
          <ViewButton $active aria-label="普通">
            <Svg w={17} h={17}><path d="M1 1h15v15H1zM1 6h15M1 11h15M6 1v15M11 1v15" stroke="#555" strokeWidth="1.500" /></Svg>
          </ViewButton>
          <ViewButton aria-label="页面布局">
            <Svg w={18} h={17}><path d="M1 1h16v15H1zM4.500 3.500h9v10h-9zM6.500 6h5M6.500 8.500h5M6.500 11h5" stroke="#555" strokeWidth="1.400" /></Svg>
          </ViewButton>
          <ViewButton aria-label="分页预览">
            <Svg w={18} h={17}><path d="M1 1h16v15H1zM1 9.500h10.500V1M6.500 1v8.500" stroke="#555" strokeWidth="1.500" /></Svg>
          </ViewButton>
          <ZoomStep aria-label="缩小"><Svg w={10} h={11}><path d="M0 5.500h10" stroke="#444" /></Svg></ZoomStep>
          <ZoomSlider type="range" min={0} max={100} defaultValue={50} aria-label="缩放" />
          <ZoomStep aria-label="放大"><Svg w={11} h={11}><path d="M0 5.500h11M5.500 0v11" stroke="#444" /></Svg></ZoomStep>
          <ZoomValue>100%</ZoomValue>
        </StatusTools>
      </StatusBar>
    </Window>
  );
}
